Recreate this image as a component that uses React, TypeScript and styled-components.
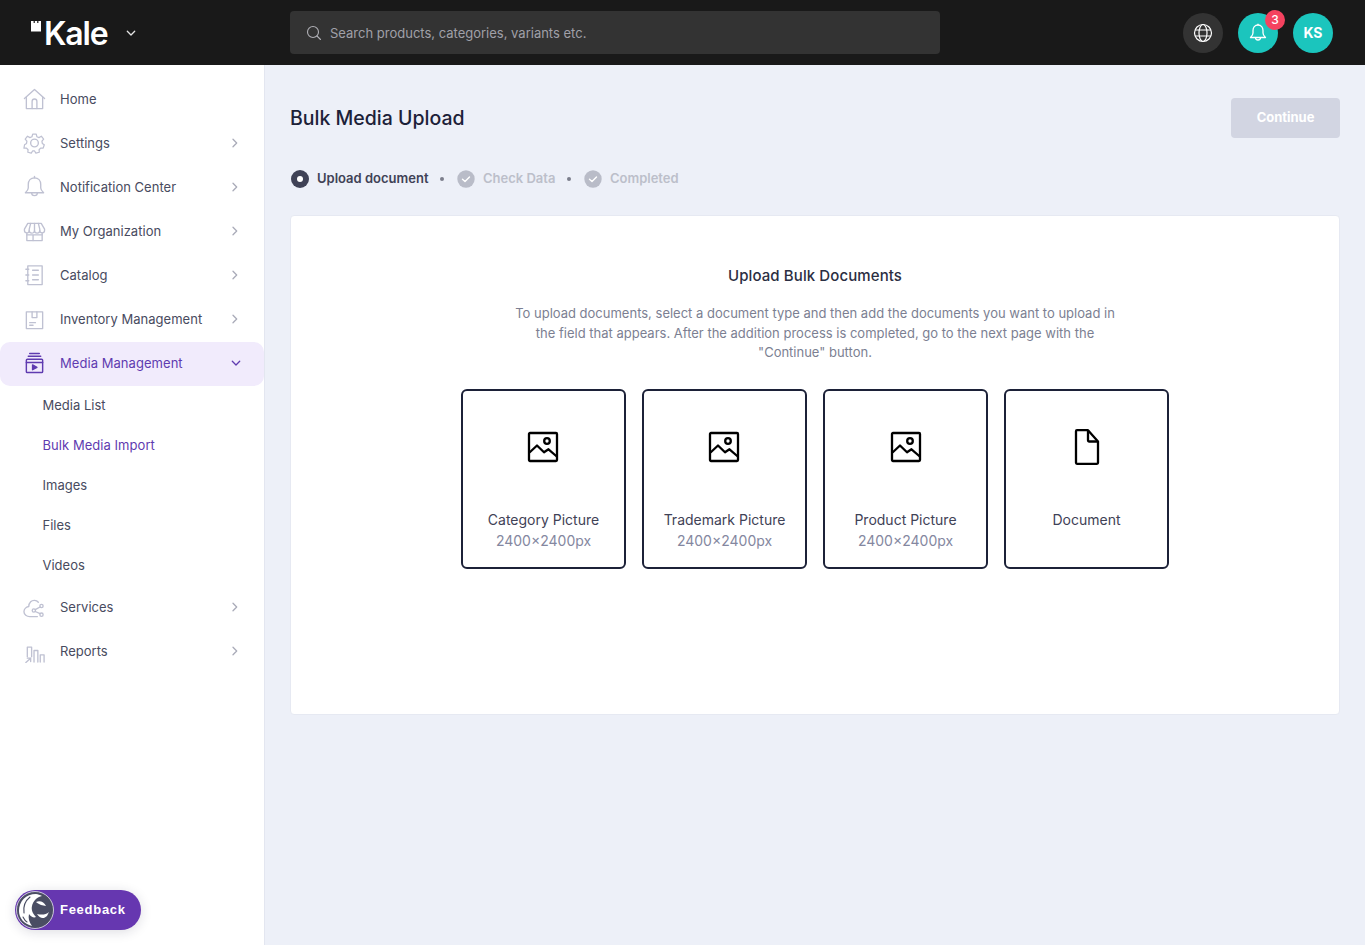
import React from "react";
import styled, { createGlobalStyle } from "styled-components";

const Global = createGlobalStyle`
  html, body { margin: 0; padding: 0; background: #edf0f8; }
  * { box-sizing: border-box; }
  body { font-family: Inter, "Liberation Sans", sans-serif; }
`;

const Page = styled.div`
  width: 100%;
  height: 945px;
  display: flex;
  flex-direction: column;
  overflow: hidden;
  position: relative;
`;

const Header = styled.header`
  height: 65px;
  flex: none;
  background: #191919;
  display: flex;
  align-items: center;
  padding-right: 32px;
`;

const Brand = styled.div`
  width: 290px;
  flex: none;
  display: flex;
  align-items: center;
  padding-left: 31px;
  color: #fff;
`;

const CrownMark = styled.svg`
  margin-bottom: 13px;
  flex: none;
`;

const BrandName = styled.span`
  font-size: 32px;
  font-weight: 600;
  line-height: 40px;
  letter-spacing: -1.2px;
  margin-left: 3px;
  margin-top: 3px;
  width: 79px;
`;

const Search = styled.div`
  width: 650px;
  height: 43px;
  border-radius: 4px;
  background: #333333;
  display: flex;
  align-items: center;
  padding-left: 16px;
  gap: 8px;
  color: #a0a0a8;
  font-size: 13px;
`;

const HeaderRight = styled.div`
  margin-left: auto;
  display: flex;
  align-items: center;
  gap: 15px;
`;

const RoundButton = styled.div<{ $bg: string }>`
  width: 40px;
  height: 40px;
  border-radius: 50%;
  background: ${(p) => p.$bg};
  color: #fff;
  display: flex;
  align-items: center;
  justify-content: center;
  font-size: 14px;
  font-weight: 700;
  position: relative;
`;

const Badge = styled.span`
  position: absolute;
  top: -3px;
  right: -7px;
  width: 20px;
  height: 20px;
  border-radius: 50%;
  background: #f5425f;
  color: #fff;
  font-size: 12px;
  font-weight: 500;
  display: flex;
  align-items: center;
  justify-content: center;
`;

const Body = styled.div`
  flex: 1;
  display: flex;
  min-height: 0;
`;

const Sidebar = styled.nav`
  width: 265px;
  flex: none;
  background: #fff;
  border-right: 1px solid #e3e6f0;
  padding-top: 12px;
  position: relative;
`;

const MenuItem = styled.div`
  height: 44px;
  display: flex;
  align-items: center;
  padding-left: 23px;
  padding-right: 21px;
  color: #484b60;
  font-size: 13px;
  letter-spacing: 0.02px;
`;

const ActiveMenuItem = styled(MenuItem)`
  margin: 1px 0 -1px;
  padding-bottom: 2px;
  padding-right: 20px;
  border-radius: 10px;
  background: #f1ebfc;
  color: #5f3bb0;
  letter-spacing: 0.05px;
`;

const MenuIcon = styled.span<{ $color: string }>`
  width: 23px;
  height: 24px;
  margin-right: 14px;
  display: flex;
  align-items: center;
  justify-content: center;
  flex: none;
  color: ${(p) => p.$color};
`;

const MenuLabel = styled.span`
  flex: 1;
`;

const SubItem = styled.div<{ $active?: boolean }>`
  height: 40px;
  display: flex;
  align-items: center;
  padding-left: 42.5px;
  color: ${(p) => (p.$active ? "#5f3bb0" : "#484b60")};
  font-size: 13px;
  letter-spacing: ${(p) => (p.$active ? "0.05px" : "0")};
`;

const Feedback = styled.div`
  position: absolute;
  left: 15px;
  bottom: 15px;
  width: 126px;
  height: 40px;
  border-radius: 20px;
  background: #6637b0;
  box-shadow: 0 2px 12px rgba(30, 30, 60, 0.15);
  display: flex;
  align-items: center;
  color: #fff;
  font-family: "Liberation Sans", Arial, sans-serif;
  font-size: 13px;
  font-weight: 700;
  letter-spacing: 0.72px;
  padding-left: 1px;
  gap: 6px;
`;

const FeedbackLabel = styled.span`
  margin-bottom: 2px;
`;

const Main = styled.main`
  flex: 1;
  padding: 33px 25px 0 25px;
`;

const TopRow = styled.div`
  display: flex;
  justify-content: space-between;
  align-items: center;
  height: 40px;
`;

const Title = styled.h1`
  margin: 0;
  font-size: 19.5px;
  line-height: 40px;
  font-weight: 500;
  color: #1c2138;
`;

const Continue = styled.div`
  width: 109px;
  height: 40px;
  padding-bottom: 2px;
  border-radius: 4px;
  background: #d2d5e2;
  color: #fff;
  font-size: 13px;
  font-weight: 700;
  letter-spacing: -0.02px;
  display: flex;
  align-items: center;
  justify-content: center;
`;

const Stepper = styled.div`
  display: flex;
  align-items: center;
  height: 18px;
  margin-top: 32px;
  margin-left: 1px;
  font-size: 13px;
  font-weight: 600;
`;

const StepLabel = styled.span<{ $current?: boolean }>`
  margin-left: 8px;
  margin-bottom: 2px;
  color: ${(p) => (p.$current ? "#3f4256" : "#bcbfca")};
`;

const StepDot = styled.span`
  width: 4px;
  height: 4px;
  border-radius: 50%;
  background: #7b7e8c;
  margin: 0 12.5px 0 12px;
  flex: none;
`;

const Panel = styled.section`
  margin-top: 27px;
  height: 500px;
  background: #fff;
  border: 1px solid #e6e9f2;
  border-radius: 4px;
  display: flex;
  flex-direction: column;
  align-items: center;
  padding-top: 50px;
`;

const PanelTitle = styled.h2`
  margin: 0;
  font-size: 15px;
  line-height: 20px;
  font-weight: 500;
  letter-spacing: 0.1px;
  color: #2b2e42;
`;

const PanelText = styled.p`
  margin: 18px 0 0;
  width: 610px;
  text-align: center;
  font-size: 13px;
  line-height: 19.5px;
  color: #7c7f92;
`;

const Tiles = styled.div`
  display: flex;
  gap: 16px;
  margin-top: 26px;
`;

const Tile = styled.div`
  width: 165px;
  height: 180px;
  border: 2px solid #1c2138;
  border-radius: 6px;
  display: flex;
  flex-direction: column;
  align-items: center;
  padding-top: 40px;
`;

const TileIcon = styled.div<{ $shift: number }>`
  width: 32px;
  height: 32px;
  color: #000;
  margin-bottom: 46px;
  margin-left: ${(p) => p.$shift}px;
  flex: none;
`;

const FileMark = styled.svg`
  display: block;
  margin-top: -2px;
`;

const TileName = styled.div`
  font-size: 14px;
  line-height: 21px;
  color: #3f4256;
`;

const TileSize = styled.div`
  font-size: 14px;
  line-height: 21px;
  color: #8487a0;
`;

const Line = ({ children, size = 24, sw = 1.4, vb = 24 }: { children: React.ReactNode; size?: number; sw?: number; vb?: number }) => (
  <svg width={size} height={size} viewBox={`0 0 ${vb} ${vb}`} fill="none" stroke="currentColor" strokeWidth={sw} strokeLinecap="round" strokeLinejoin="round">
    {children}
  </svg>
);

const HomeIcon = () => (
  <Line>
    <path d="M1.5 11.5 12 2l10.5 9.5" />
    <path d="M3.5 10v12h17V10" />
    <path d="M9.5 22v-7.5a2.5 2.5 0 0 1 5 0V22" />
  </Line>
);
const GearIcon = () => (
  <Line>
    <circle cx="12" cy="12" r="4" />
    <path d="M10 2h4l.7 3 2.3 1 2.7-1.6 2.6 3.2-1.9 2.4.4 2.5 2.2 1.5-1.2 3.8-2.9-.1-1.7 1.9.2 2.8-3.8 1-1.5-2.4h-2.2l-1.5 2.4-3.8-1 .2-2.8-1.7-1.9-2.9.1L.9 14l2.2-1.5.4-2.5-1.9-2.4 2.6-3.2L6.9 6l2.3-1z" transform="translate(.8 .8) scale(.93)" />
  </Line>
);
const BellIcon = () => (
  <Line>
    <path d="M12 2.500c-4 0-6.500 3-6.500 7v3.500c0 2-1.500 3.500-3 5h19c-1.500-1.500-3-3-3-5V9.500c0-4-2.500-7-6.500-7z" />
    <path d="M12 1v1.500" />
    <path d="M9 18a3 3 0 0 0 6 0" />
  </Line>
);
const StoreIcon = () => (
  <Line>
    <path d="M5 4h14l3.500 6v1.500a2.500 2.500 0 0 1-5 0 2.700 2.700 0 0 1-5.500 0 2.700 2.700 0 0 1-5.500 0 2.500 2.500 0 0 1-5 0V10z" />
    <path d="M8 4 6.500 10v1.500M12 4v7.500M16 4l1.500 6v1.500" />
    <path d="M4 14.500V22h16v-7.500" />
    <path d="M4 16h16M10.500 16v6" />
  </Line>
);
const CatalogIcon = () => (
  <Line>
    <path d="M5 2.500h15v19.500H5z" />
    <path d="M3 6h3M3 12h3M3 18h3M10 7h6M10 12h6M10 17h6" />
  </Line>
);
const BoxIcon = () => (
  <Line>
    <path d="M3.500 4.500h17V22h-17z" />
    <path d="M9.500 4.500v6h5v-6M7 18.500h3.500M7 15.800h6" />
  </Line>
);
const MediaIcon = () => (
  <Line sw={1.5}>
    <path d="M7 2h10M5.500 5h13" />
    <rect x="3.500" y="8" width="17" height="14" rx="1" />
    <path d="M3.500 11.500h17" />
    <path d="M10 14v5l4.500-2.500z" fill="currentColor" />
  </Line>
);
const CloudIcon = () => (
  <Line>
    <path d="M16 7C14 4.500 10 4.500 8 6.500 6.500 8 6 10 6 11.500 3 12 1 14.500 1 17c0 3 3 5 6 5h8" />
    <circle cx="19.300" cy="11" r="1.700" />
    <circle cx="11.300" cy="15.700" r="1.700" />
    <circle cx="19.300" cy="20" r="1.700" />
    <path d="M12.800 14.800 17.800 12M12.800 16.700 17.800 19" />
  </Line>
);
const ReportIcon = () => (
  <Line>
    <path d="M4.500 18V8H9v10M11.500 23.500V11.500h4v12M18 23.500V16h4v7.500" />
    <path d="M3 24l5-4.500M4.500 19.500H8V23" />
  </Line>
);
const Chevron = () => (
  <svg width="16" height="16" viewBox="0 0 16 16" fill="none" stroke="#a9abb8" strokeWidth="1.300" strokeLinecap="round" strokeLinejoin="round">
    <path d="M6 4.300l3.700 3.700-3.700 3.700" />
  </svg>
);
const ChevronDown = ({ color }: { color: string }) => (
  <svg width="16" height="16" viewBox="0 0 16 16" fill="none" stroke={color} strokeWidth="1.300" strokeLinecap="round" strokeLinejoin="round">
    <path d="M4.300 6.300 8 10l3.700-3.700" />
  </svg>
);

const Crown = () => (
  <CrownMark width="10" height="11" viewBox="0 0 10 11" fill="#fff">
    <path d="M0 0h2.600v2H3.800V0h2.400v2h1.200V0H10v10.500H0z" />
  </CrownMark>
);

const ImageGlyph = () => (
  <svg width="32" height="32" viewBox="0 0 32 32" fill="none" stroke="currentColor" strokeWidth="2.300" strokeLinejoin="round">
    <rect x="2" y="2" width="28" height="28" rx="1" />
    <circle cx="20" cy="10" r="2.800" />
    <path d="M2.500 21.500 10 14.500l7 6.800 4.500-3L29.800 25.500" />
  </svg>
);
const FileGlyph = () => (
  <FileMark width="32" height="36" viewBox="0 0 32 36" fill="none" stroke="currentColor" strokeWidth="2.300" strokeLinejoin="round">
    <path d="M7 1.150h11L28 12.500v21.350a1 1 0 0 1-1 1H7a1 1 0 0 1-1-1V2.150a1 1 0 0 1 1-1z" />
    <path d="M18 1.500v10a1 1 0 0 0 1 1h9" />
  </FileMark>
);

const CurrentStep = () => (
  <svg width="18" height="18" viewBox="0 0 18 18">
    <circle cx="9" cy="9" r="9" fill="#3f4256" />
    <circle cx="9" cy="9" r="3" fill="#fff" />
  </svg>
);
const DoneStep = () => (
  <svg width="18" height="18" viewBox="0 0 18 18">
    <circle cx="9" cy="9" r="8.700" fill="#b9bcc8" />
    <path d="M5.500 9.300 8 11.600l4.500-4.600" fill="none" stroke="#fff" strokeWidth="1.400" strokeLinecap="round" strokeLinejoin="round" />
  </svg>
);

const LionLogo = () => (
  <svg width="38" height="38" viewBox="0 0 38 38">
    <circle cx="19" cy="19" r="18.500" fill="#4a4d63" stroke="#e8e8ee" strokeWidth="0.800" />
    <path d="M20 3C10 3 3 10 3 20c0 7 5 13 13 15-3-4-4-8-3-12 2 3 5 4 7 3-3-3-5-7-4-11 1-5 5-9 10-10-2-1-4-2-6-2z" fill="#fff" />
    <path d="M14 6C9 10 7 15 8 22M7 26c1 2 2 4 4 5" fill="none" stroke="#4a4d63" strokeWidth="1.100" strokeLinecap="round" />
    <path d="M20 11c4-2 8 0 10 4l-5-1c-2-1-4-2-5-3z" fill="#fff" />
    <path d="M21 23c4 1 9 1 12-2l-2 4c-3 3-7 3-10-2z" fill="#fff" />
  </svg>
);

const menuTop = [
  { label: "Home", icon: <HomeIcon />, chevron: false },
  { label: "Settings", icon: <GearIcon />, chevron: true },
  { label: "Notification Center", icon: <BellIcon />, chevron: true },
  { label: "My Organization", icon: <StoreIcon />, chevron: true },
  { label: "Catalog", icon: <CatalogIcon />, chevron: true },
  { label: "Inventory Management", icon: <BoxIcon />, chevron: true },
];
const subItems = ["Media List", "Bulk Media Import", "Images", "Files", "Videos"];
const menuBottom = [
  { label: "Services", icon: <CloudIcon /> },
  { label: "Reports", icon: <ReportIcon /> },
];
const tiles = [
  { name: "Category Picture", size: "2400×2400px", shift: -1 },
  { name: "Trademark Picture", size: "2400×2400px", shift: -1 },
  { name: "Product Picture", size: "2400×2400px", shift: 0 },
  { name: "Document", shift: -1 },
];

const iconColor = "#bfc1d2";

export default function App() {
  return (
    <Page>
      <Global />
      <Header>
        <Brand>
          <Crown />
          <BrandName>Kale</BrandName>
          <ChevronDown color="#e4e4e4" />
        </Brand>
        <Search>
          <svg width="16" height="16" viewBox="0 0 16 16" fill="none" stroke="#b0b0b6" strokeWidth="1.100" strokeLinecap="round">
            <circle cx="7" cy="7" r="5.500" />
            <path d="M11 11l3.500 3.500" />
          </svg>
          Search products, categories, variants etc.
        </Search>
        <HeaderRight>
          <RoundButton $bg="#333333">
            <svg width="20" height="20" viewBox="0 0 20 20" fill="none" stroke="#fff" strokeWidth="1.200">
              <circle cx="10" cy="10" r="8.500" />
              <ellipse cx="10" cy="10" rx="4" ry="8.500" />
              <path d="M2 7h16M2 13h16" />
            </svg>
          </RoundButton>
          <RoundButton $bg="#1bc5bd">
            <svg width="20" height="20" viewBox="0 0 20 20" fill="none" stroke="#fff" strokeWidth="1.300" strokeLinejoin="round">
              <path d="M10 2C6.800 2 5 4.500 5 7.500V10c0 2-1.300 3.300-2.500 4.500h15C16.300 13.300 15 12 15 10V7.500C15 4.500 13.200 2 10 2z" />
              <path d="M10 .8V2M7.500 14.500a2.500 2.500 0 0 0 5 0" />
            </svg>
            <Badge>3</Badge>
          </RoundButton>
          <RoundButton $bg="#1bc5bd">KS</RoundButton>
        </HeaderRight>
      </Header>
      <Body>
        <Sidebar>
          {menuTop.map((m) => (
            <MenuItem key={m.label}>
              <MenuIcon $color={iconColor}>{m.icon}</MenuIcon>
              <MenuLabel>{m.label}</MenuLabel>
              {m.chevron && <Chevron />}
            </MenuItem>
          ))}
          <ActiveMenuItem>
            <MenuIcon $color="#5f3bb0"><MediaIcon /></MenuIcon>
            <MenuLabel>Media Management</MenuLabel>
            <ChevronDown color="#5f3bb0" />
          </ActiveMenuItem>
          {subItems.map((s) => (
            <SubItem key={s} $active={s === "Bulk Media Import"}>{s}</SubItem>
          ))}
          {menuBottom.map((m) => (
            <MenuItem key={m.label}>
              <MenuIcon $color={iconColor}>{m.icon}</MenuIcon>
              <MenuLabel>{m.label}</MenuLabel>
              <Chevron />
            </MenuItem>
          ))}
          <Feedback>
            <LionLogo />
            <FeedbackLabel>Feedback</FeedbackLabel>
          </Feedback>
        </Sidebar>
        <Main>
          <TopRow>
            <Title>Bulk Media Upload</Title>
            <Continue>Continue</Continue>
          </TopRow>
          <Stepper>
            <CurrentStep />
            <StepLabel $current>Upload document</StepLabel>
            <StepDot />
            <DoneStep />
            <StepLabel>Check Data</StepLabel>
            <StepDot />
            <DoneStep />
            <StepLabel>Completed</StepLabel>
          </Stepper>
          <Panel>
            <PanelTitle>Upload Bulk Documents</PanelTitle>
            <PanelText>
              To upload documents, select a document type and then add the documents you want to upload in the field that appears. After the addition process is completed, go to the next page with the "Continue" button.
            </PanelText>
            <Tiles>
              {tiles.map((t) => (
                <Tile key={t.name}>
                  <TileIcon $shift={t.shift}>{t.size ? <ImageGlyph /> : <FileGlyph />}</TileIcon>
                  <TileName>{t.name}</TileName>
                  {t.size && <TileSize>{t.size}</TileSize>}
                </Tile>
              ))}
            </Tiles>
          </Panel>
        </Main>
      </Body>
    </Page>
  );
}
